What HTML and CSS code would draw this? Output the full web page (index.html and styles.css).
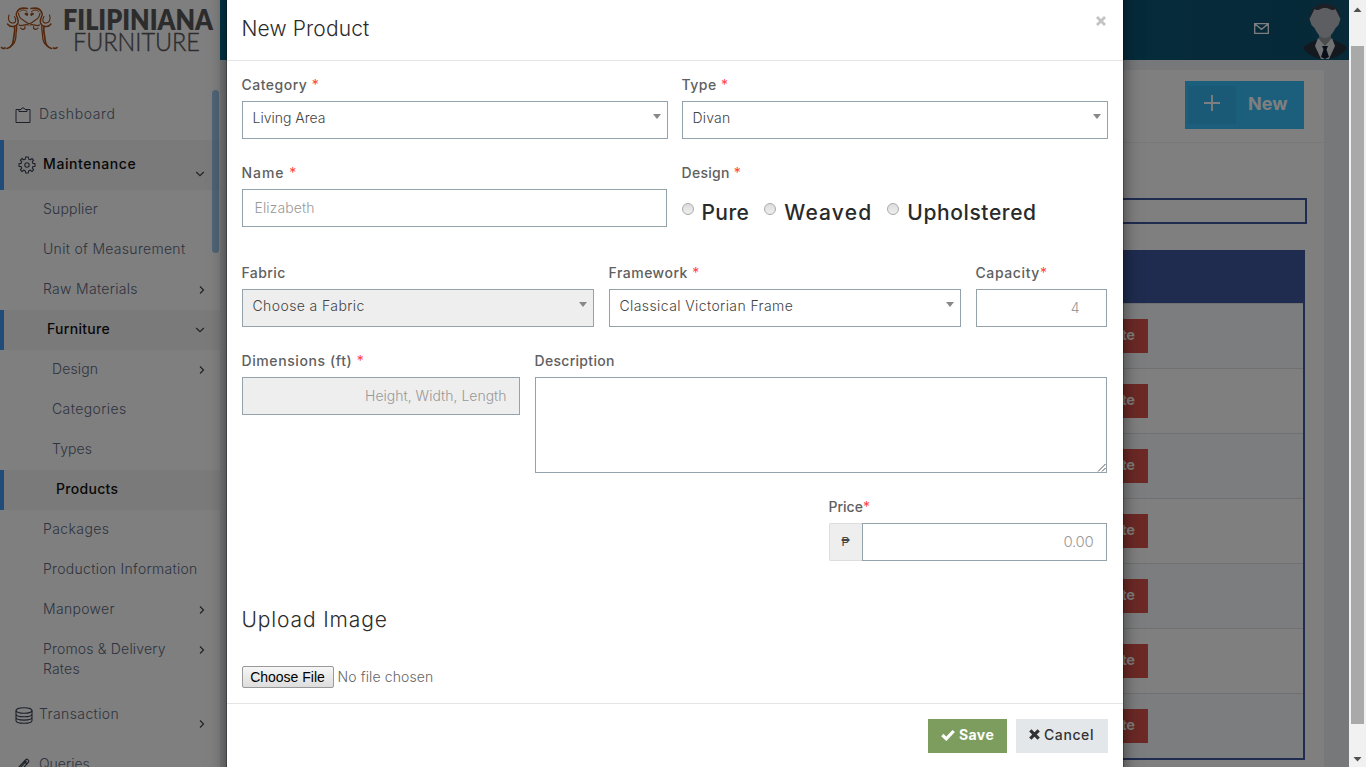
FILE: index.html
```html
<!DOCTYPE html>
<html lang="en">
<head>
<meta charset="utf-8">
<title>Filipiniana Furniture</title>
<link rel="stylesheet" href="styles.css">
</head>
<body>
<svg width="0" height="0" class="defs">
  <symbol id="right" viewBox="0 0 10 10"><path d="M3 1.500 6.500 5 3 8.500" fill="none" stroke="currentColor" stroke-width="1.200"/></symbol>
  <symbol id="down" viewBox="0 0 10 10"><path d="M1.200 3 5 6.600 8.800 3" fill="none" stroke="currentColor" stroke-width="1.200"/></symbol>
</svg>
<div class="window">
  <div class="app">
    <aside class="sidebar">
      <div class="logo">
        <svg width="220" height="60" viewBox="0 0 220 60">
          <g fill="none" stroke="#a8501a" stroke-linecap="round">
            <g id="half">
              <path d="M1.500 47.500c1 1 2.500 1 3.500.500M7 48.500c4-1 6-4 6.500-9c.500-6 2-9 1-13" stroke-width="1.700"/>
              <path d="M10 47c5-3 6-7 6-12s1.500-6 .500-9" stroke-width="1.300"/>
              <path d="M7.500 24c3 4 9 3 10.500-1c1.500-5-3-6-1.500-10c1.500-4 6-5.500 11-4.500" stroke-width="1.500"/>
              <path d="M9 15c-1.500 4 0 8 4 8c3.500 0 3-4 1.500-6.500" stroke-width="1.100"/>
              <path d="M18.500 13c.500 6 3.500 6 6 8c2 1.500 3 2.500 4.500 2.500M19 25c3 2 6-1.500 9.500 0M20.500 28c2 2.500 5 1 4.500-1.500" stroke-width="1.200"/>
              <path d="M20 11.500c2-2.500 5-1.500 7 0" stroke-width="1"/>
              <path d="M25.500 14c1-1 2.500 0 1.500 1" stroke-width="1.800"/>
            </g>
            <use href="#half" transform="matrix(-1 0 0 1 58.500 0)"/>
          </g>
          <text x="63" y="29.500" class="brand bold" textLength="150" lengthAdjust="spacingAndGlyphs">FILIPINIANA</text>
          <text x="73" y="51" class="brand thin" textLength="127" lengthAdjust="spacingAndGlyphs">FURNITURE</text>
        </svg>
      </div>
      <nav class="menu">
        <a class="top dash"><svg width="16" height="17" viewBox="0 0 16 17"><path d="M4 2.500H1v13h14v-13h-3M4 4.500h8v-2h-2l-1-1.500H7L6 2.500H4z" fill="none" stroke="currentColor"/></svg><span class="ls6">Dashboard</span></a>
        <a class="top open"><svg width="18" height="18" viewBox="0 0 18 18"><path d="M7.700 1h2.600l.4 2.200 1.500.6L14 2.500 15.600 4.200l-1.300 1.700.6 1.500 2.100.3v2.600l-2.100.3-.6 1.500 1.300 1.700L14 15.500l-1.800-1.300-1.500.6-.4 2.200H7.700l-.4-2.200-1.500-.6L4 15.500l-1.600-1.700 1.300-1.700-.6-1.500L1 10.300V7.700l2.100-.3.600-1.500L2.400 4.200 4 2.500l1.800 1.300 1.500-.6z" fill="none" stroke="currentColor" stroke-width="1.100"/><circle cx="9" cy="9" r="2.200" fill="none" stroke="currentColor" stroke-width="1.100"/></svg><span class="ls6">Maintenance</span><svg class="chev low"><use href="#down"/></svg></a>
        <a class="sub ls2"><span>Supplier</span></a>
        <a class="sub ls3"><span>Unit of Measurement</span></a>
        <a class="sub ls3"><span>Raw Materials</span><svg class="chev side"><use href="#right"/></svg></a>
        <a class="sub open ls3"><span>Furniture</span><svg class="chev"><use href="#down"/></svg></a>
        <a class="sub deep ls1"><span>Design</span><svg class="chev side"><use href="#right"/></svg></a>
        <a class="sub deep ls4"><span>Categories</span></a>
        <a class="sub deep ls1"><span>Types</span></a>
        <a class="sub deep open ls3"><span>Products</span></a>
        <a class="sub ls4"><span>Packages</span></a>
        <a class="sub ls3"><span>Production Information</span></a>
        <a class="sub ls3"><span>Manpower</span><svg class="chev side"><use href="#right"/></svg></a>
        <a class="sub two ls2"><span>Promos &amp; Delivery<br>Rates</span><svg class="chev side"><use href="#right"/></svg></a>
        <a class="top base"><svg width="18" height="17" viewBox="0 0 18 17"><g fill="none" stroke="currentColor" stroke-width="1.100"><ellipse cx="9" cy="3.500" rx="8" ry="2.800"/><path d="M1 3.500v10c0 1.600 3.600 2.800 8 2.800s8-1.200 8-2.800v-10M1 7c0 1.600 3.600 2.800 8 2.800S17 8.600 17 7M1 10.300c0 1.600 3.600 2.800 8 2.800s8-1.200 8-2.800"/></g></svg><span class="ls4">Transaction</span><svg class="chev side low"><use href="#right"/></svg></a>
        <a class="top dash"><svg width="16" height="17" viewBox="0 0 16 17"><path d="M2 15l1-4L11 2.500c1-1 3.500 1.300 2.500 2.500L6 13.500zM9.500 4.500l2.500 2.500M11.500 4l-7 7.500" fill="none" stroke="currentColor" stroke-width="1.200"/></svg><span>Queries</span></a>
      </nav>
      <div class="side-thumb"></div>
    </aside>
    <main class="main">
      <header class="topbar">
        <svg width="15" height="11" viewBox="0 0 15 11"><path d="M.7.700h13.600v9.600H.7zM1 1l6.500 5.300L14 1" fill="none" stroke="#fff" stroke-width="1.300"/></svg>
        <svg class="avatar" width="46" height="58" viewBox="0 0 46 58">
          <path d="M9 22C6 9 13 3 23 3s17 6 14 19" fill="#3b3e49"/>
          <path d="M17 31h12v10l-6 5-6-5z" fill="#939b9b"/>
          <path d="M7.500 18l5-10c4 3 5-1 10.500-1s6.500 4 10.500 1l5 10-2 6-3 3c-3 6-6 10-10.500 10s-7.500-4-10.500-10l-3-3z" fill="#b8bdc2"/>
          <path d="M1 47c3-5 11-6 15-9l7 18 7-18c4 3 12 4 15 9-5 7-13 11-22 11S6 54 1 47z" fill="#28303f"/>
          <path d="M16 37l7 8 7-8 3 8-6 13h-8l-6-13z" fill="#dfe2e6"/>
          <path d="M20 45h6l-1.500 3.500L27 56l-4 2-4-2 2.500-7.500z" fill="#151d30"/>
        </svg>
      </header>
      <div class="content">
        <section class="card">
          <div class="card-head"><button class="new"><span class="plus"><svg width="18" height="18" viewBox="0 0 18 18"><path d="M9 1v16M1 9h16" stroke="#fff" stroke-width="1.800"/></svg></span><b>New</b></button></div>
          <div class="search"></div>
          <div class="table">
            <div class="thead"></div>
            <div class="tr"><span>Delete</span></div>
            <div class="tr"><span>Delete</span></div>
            <div class="tr"><span>Delete</span></div>
            <div class="tr"><span>Delete</span></div>
            <div class="tr"><span>Delete</span></div>
            <div class="tr"><span>Delete</span></div>
            <div class="tr"><span>Delete</span></div>
          </div>
        </section>
      </div>
    </main>
    <div class="backdrop"></div>
    <div class="modal">
      <div class="m-head"><h4 class="ls1">New Product</h4><svg width="10" height="10" viewBox="0 0 10 10"><path d="M1 1l8 8M9 1l-8 8" stroke="#c3c3c3" stroke-width="2.800"/></svg></div>
      <div class="m-body">
        <div class="row halves">
          <div><label class="ls5">Category <i>*</i></label><div class="select">Living Area</div></div>
          <div><label class="ls5">Type <i>*</i></label><div class="select ls2">Divan</div></div>
        </div>
        <div class="row halves second">
          <div><label class="ls9">Name <i>*</i></label><div class="input short ls1">Elizabeth</div></div>
          <div><label class="ls3">Design <i>*</i></label>
            <div class="radios"><span class="radio"></span><span class="opt ls4">Pure</span><span class="radio"></span><span class="opt ls10">Weaved</span><span class="radio"></span><span class="opt ls6">Upholstered</span></div>
          </div>
        </div>
        <div class="row thirds">
          <div><label class="ls4">Fabric</label><div class="select off ls4">Choose a Fabric</div></div>
          <div><label class="ls5">Framework <i>*</i></label><div class="select ls4">Classical Victorian Frame</div></div>
          <div><label class="ls6">Capacity<i>*</i></label><div class="input right cap">4</div></div>
        </div>
        <div class="row dims">
          <div><label class="ls6">Dimensions (ft) <i>*</i></label><div class="input right off">Height, Width, Length</div></div>
          <div><label class="ls3">Description</label><div class="area"><svg width="9" height="9" viewBox="0 0 9 9"><path d="M1 8.500 8.500 1M5 8.500 8.500 5" stroke="#555"/></svg></div></div>
        </div>
        <div class="price"><label>Price<i>*</i></label>
          <div class="group"><span class="addon">₱</span><div class="input right amount">0.00</div></div>
        </div>
        <h4 class="upload ls8">Upload Image</h4>
        <div class="file"><span class="choose">Choose File</span><span class="ls1">No file chosen</span></div>
      </div>
      <div class="m-foot">
        <button class="btn save"><svg width="14" height="12" viewBox="0 0 14 12"><path d="M1.300 6 5.300 9.800 12.700 2" fill="none" stroke="#fff" stroke-width="3.200"/></svg><b class="ls4">Save</b></button>
        <button class="btn cancel"><svg width="11" height="11" viewBox="0 0 11 11"><path d="M1.300 1.300l8.400 8.400M9.700 1.300 1.300 9.700" stroke="#333" stroke-width="3.200"/></svg><span class="ls6">Cancel</span></button>
      </div>
    </div>
  </div>
  <div class="scrollbar">
    <svg width="9" height="5" viewBox="0 0 9 5"><path d="M0.500 5 4.500.500 8.500 5z" fill="#505050"/></svg>
    <div class="thumb"></div>
    <svg width="9" height="5" viewBox="0 0 9 5"><path d="M0.500 0 4.500 4.500 8.500 0z" fill="#505050"/></svg>
  </div>
</div>
</body>
</html>
```
FILE: styles.css
```css
* { box-sizing: border-box; }
body { margin: 0; font: 300 14px/20px Inter, "Open Sans", sans-serif; color: #555; overflow: hidden; }
.defs { position: absolute; }
.window { display: flex; width: 1366px; height: 767px; overflow: hidden; }
.app { position: relative; display: flex; width: 1349px; height: 767px; overflow: hidden; }
button { font: inherit; border: 0; padding: 0; }

.ls1 { letter-spacing: .12px; }
.ls2 { letter-spacing: .18px; }
.ls3 { letter-spacing: .3px; }
.ls4 { letter-spacing: .4px; }
.ls5 { letter-spacing: .5px; }
.ls6 { letter-spacing: .6px; }
.ls8 { letter-spacing: .86px; }
.ls9 { letter-spacing: .95px; }
.ls10 { letter-spacing: 1.15px; }

/* sidebar */
.sidebar { position: relative; width: 220px; background: #fff; }
.logo { height: 90px; }
.logo svg { display: block; }
.brand { font-family: Lato, sans-serif; fill: #58585a; }
.brand.bold { font-size: 28px; font-weight: 800; }
.brand.thin { font-size: 26px; font-weight: 300; stroke: #58585a; stroke-width: .4px; }
.menu { display: flex; flex-direction: column; color: #5d6880; }
.menu a { display: flex; align-items: center; padding-right: 15px; }
.menu a span { flex: 1; position: relative; top: -1px; }
.menu .top { height: 50px; padding-left: 15px; gap: 8px; }
.menu .base { gap: 6px; }
.menu .top > svg:first-child { color: #3c4356; }
.menu .sub { height: 40px; padding-left: 43px; }
.menu .deep { padding-left: 52px; }
.menu .two { height: 60px; }
.menu .two .chev { margin-bottom: 20px; }
.menu a.open { border-left: 4px solid #4298f5; background: #f5f5f5; color: #111; font-weight: 450; }
.menu .top.open { padding-left: 14px; gap: 7px; }
.menu .chev { width: 10px; height: 10px; color: #444; flex: none; margin-top: -1px; }
.menu .side { margin-right: -2px; }
.menu .chev.low { margin-top: 17px; }
.side-thumb { position: absolute; left: 212px; top: 90px; width: 7px; height: 163px; border-radius: 4px; background: rgba(94, 163, 226, .6); }

/* page behind the dialog */
.main { flex: 1; display: flex; flex-direction: column; background: #eff1f5; }
.topbar { height: 60px; display: flex; align-items: center; justify-content: flex-end; background: linear-gradient(90deg, #006a8e, #0e5270); }
.topbar > svg:first-child { margin: -4px 33px 0 0; }
.topbar .avatar { margin-right: 1px; }
.content { padding: 10px 25px 0; flex: 1; }
.card { background: #fff; height: 697px; }
.card-head { height: 73px; padding: 11px 20px 0; border-bottom: 1px solid #f2f2f2; display: flex; justify-content: flex-end; }
.new { width: 119px; height: 48px; background: #36bff8; color: #fff; display: flex; align-items: center; padding-left: 3px; font-size: 18px; }
.new b { font-weight: 700; margin-left: 12px; position: relative; top: -1px; }
.plus { width: 48px; height: 38px; background: #34b5ed; display: flex; justify-content: center; align-items: center; padding-bottom: 5px; }
.search { height: 26px; margin: 55px 17px 26px; border: 2px solid #3e589f; }
.table { margin: 0 19px 0 20px; border: 2px solid #3e589f; border-top: 0; height: 510px; }
.thead { height: 53px; background: #3e589f; }
.tr { height: 65px; border-top: 1px solid #dce0e3; display: flex; align-items: center; justify-content: flex-end; padding-right: 155px; }
.tr:nth-child(even) { background: #f8fafc; }
.tr span { height: 34px; padding: 6px 13px 8px; background: #d9534c; color: #fff; font-size: 14.500px; font-weight: 700; }
.backdrop { position: absolute; inset: 0; background: rgba(0, 0, 0, .5); }

/* dialog */
.modal { position: absolute; left: 226px; top: -30px; width: 898px; height: 820px; padding-top: 29px; background: #fff; background-clip: padding-box; border: 1px solid rgba(0, 0, 0, .25); box-shadow: 0 5px 15px rgba(0, 0, 0, .5); }
.m-head { height: 61px; border-bottom: 1px solid #e5e5e5; padding: 0 17px 0 14.500px; display: flex; justify-content: space-between; }
h4 { margin: 0; font-size: 21px; line-height: 30px; font-weight: 300; color: #2c2c2c; }
.m-head h4 { margin-top: 14px; }
.m-head svg { margin-top: 16px; }
.m-body { height: 642px; padding: 14px 15px 0 14.500px; }
.row { display: grid; height: 88px; }
.halves { grid-template-columns: 426px 426px; column-gap: 14px; }
.second { height: 100px; }
.thirds { grid-template-columns: 352px 352px 131px; column-gap: 15px; }
.dims { grid-template-columns: 278px 572px; column-gap: 15px; height: 146px; }
label { display: block; height: 26px; font-weight: 450; color: #606060; white-space: nowrap; }
label i { color: #f44; font-style: normal; font-weight: 400; }
.select, .input { height: 38px; border: 1px solid #93a2ab; background: #fff; }
.select { position: relative; padding: 6px 10px; color: #444; }
.select::after { content: ""; position: absolute; right: 6px; top: 12px; border: 4px solid transparent; border-top: 5px solid #888; border-bottom: 0; }
.input { padding: 8px 12px; color: #999; }
.short { width: 425px; }
.right { text-align: right; }
.cap { padding-right: 26px; }
.off { background: #eee; }
.area { height: 96px; border: 1px solid #93a2ab; display: flex; justify-content: flex-end; align-items: flex-end; }
.radios { display: flex; align-items: center; height: 44px; }
.radio { width: 12px; height: 12px; border: 1px solid #aaa; border-radius: 50%; background: linear-gradient(#ddd, #eee); margin-bottom: 5px; }
.opt { font-size: 21px; font-weight: 450; color: #2a2a2a; margin: 3px 15px 0 8px; }
.price { width: 278px; margin-left: 587px; }
.group { display: flex; }
.addon { width: 33px; border: 1px solid #ddd; border-right: 0; border-radius: 2px 0 0 2px; background: #eee; color: #444; font: 12px/36px "Liberation Sans", sans-serif; text-align: center; }
.amount { flex: 1; font-size: 15px; letter-spacing: -.3px; }
.upload { margin-top: 44px; }
.file { display: flex; align-items: center; gap: 4px; margin-top: 31px; height: 22px; color: #666; }
.choose { width: 92px; height: 22px; border: 1px solid #999; border-radius: 2px; background: linear-gradient(#f6f6f6, #ddd); color: #000; font: 400 14px/20px "Liberation Sans", sans-serif; text-align: center; }
.m-foot { border-top: 1px solid #e5e5e5; display: flex; justify-content: flex-end; gap: 9px; padding: 15px; }
.btn { height: 34px; display: flex; align-items: center; gap: 4px; padding: 0 0 3px 13px; }
.save { width: 79px; background: #7c9d5d; color: #fff; }
.save b { font-weight: 700; }
.cancel { width: 92px; background: #e3e7ea; color: #333; font-weight: 450; }

/* window scrollbar */
.scrollbar { width: 17px; background: #f1f1f1; display: flex; flex-direction: column; align-items: center; padding: 7px 0 5px; justify-content: space-between; }
.thumb { width: 13px; height: 678px; background: #a9a9a9; }
```
